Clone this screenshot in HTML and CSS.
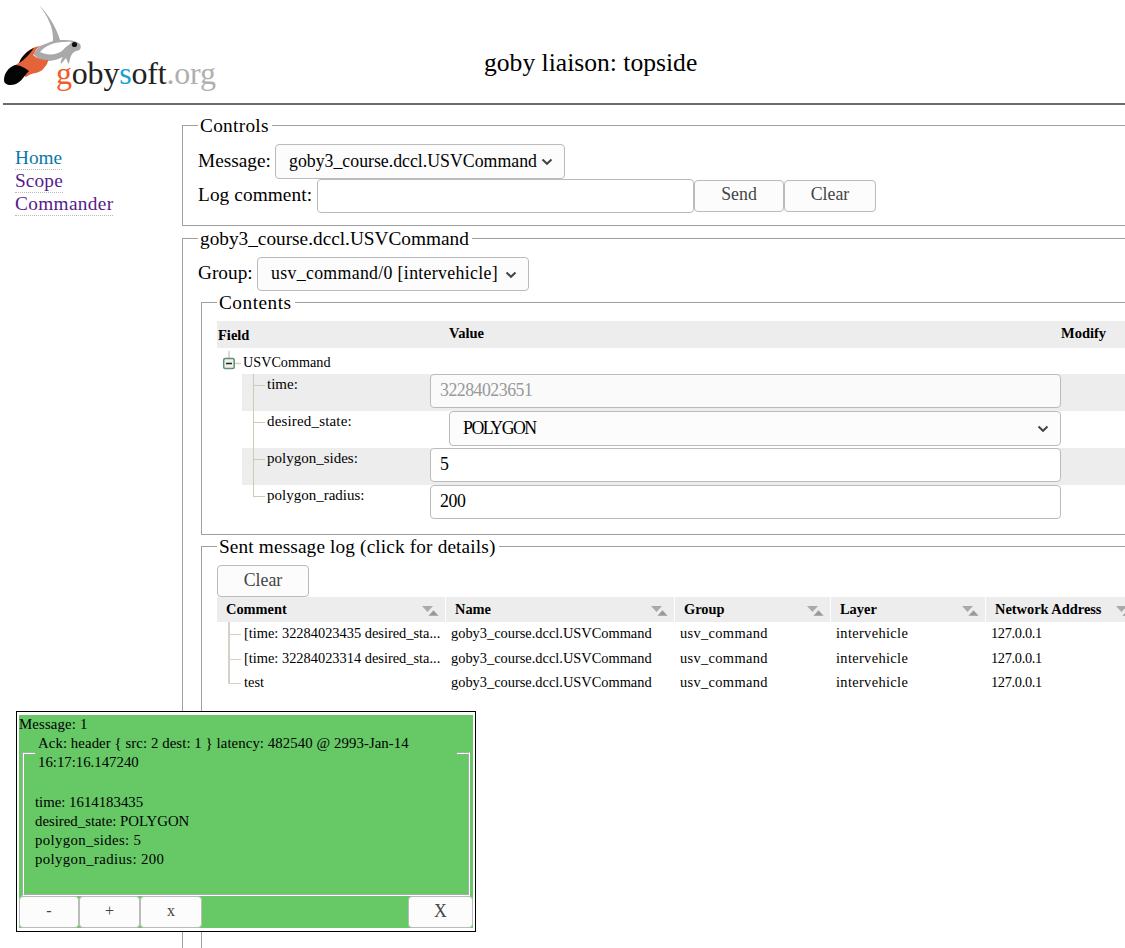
FILE: index.html
```html
<!DOCTYPE html>
<html lang="en">
<head>
<meta charset="utf-8">
<title>goby liaison: topside</title>
<link rel="stylesheet" href="styles.css">
</head>
<body>
<svg width="0" height="0" class="defs">
  <symbol id="chev" viewBox="0 0 12 8"><path d="M1.5 1.5 6 5.8 10.5 1.5" fill="none" stroke="#444" stroke-width="2"/></symbol>
  <symbol id="sort" viewBox="0 0 17 10"><path d="M0 0H11L5.5 6Z" fill="#aaa"/><path d="M6 10H17L11.500 4Z" fill="#999" stroke="#ededed" stroke-width=".5"/></symbol>
</svg>
<header class="header">
  <svg class="logo" width="222" height="100" viewBox="0 0 222 100" role="img" aria-label="gobysoft.org">
    <path d="M39 5C47 13 56 26 60 40C68 40 76 40 80 44C82 48 80 51 76 51C71 53 70 58 69 64C67 62 67 60 66 58L61 64C60 61 62 59 63 57C55 61 47 62 40 60L33 54L40 46L53 41C54 28 47 15 39 5Z" fill="#a9a9ab"/>
    <path d="M40 46C30 47 22 55 20 62L14 66L26 77C32 72 40 74 44 68C47 65 48 62 48 60C42 60 36 58 33 55C35 51 37 48 40 46Z" fill="#e4633a"/>
    <path d="M34 48C27 51 21 57 19 63C26 59 30 53 34 48Z" fill="#050505"/>
    <path d="M15 65C20 65 25 68 29 71C24 76 22 81 16 84C10 86 4 85 4 80C4 73 9 67 15 65Z" fill="#050505"/>
    <path d="M40 52C46 45 56 41 72 42C69 45 66 46 63 50C58 55 47 56 40 52Z" fill="#fff"/>
    <circle cx="74.500" cy="44.500" r="2.600" fill="#111"/>
    <text x="56" y="84" textLength="160" class="logo-text"><tspan fill="#f15a29">g</tspan><tspan fill="#222">oby</tspan><tspan fill="#1b9fd8">s</tspan><tspan fill="#222">oft</tspan><tspan fill="#b0b0b0">.org</tspan></text>
  </svg>
  <h1 class="title">goby liaison: topside</h1>
</header>
<div class="page">
  <nav class="nav">
    <a class="link home">Home</a>
    <a class="link">Scope</a>
    <a class="link commander">Commander</a>
  </nav>
  <main class="main">
    <fieldset class="box controls">
      <legend>Controls</legend>
      <div class="line"><label class="w-message">Message:</label><div class="combo message"><span>goby3_course.dccl.USVCommand</span><svg class="chev"><use href="#chev"/></svg></div></div>
      <div class="line log-line"><label class="w-log">Log comment:</label><div class="input comment"></div><button class="btn send">Send</button><button class="btn clear">Clear</button></div>
    </fieldset>
    <fieldset class="box outer">
      <legend>goby3_course.dccl.USVCommand</legend>
      <div class="line group-line"><label class="w-group">Group:</label><div class="combo group"><span>usv_command/0 [intervehicle]</span><svg class="chev"><use href="#chev"/></svg></div></div>
      <fieldset class="box contents">
        <legend class="w-contents">Contents</legend>
        <div class="tree-head"><b class="h-field">Field</b><b class="h-value">Value</b><b>Modify</b></div>
        <div class="root"><svg width="26" height="26" viewBox="0 0 26 26"><path d="M12 3V10M18 15.500H24" stroke="#d4d0c4" stroke-width="1.500" fill="none"/><rect x="6.700" y="10.500" width="10.500" height="10" rx="1.500" fill="#eef0ea" stroke="#5f8f78" stroke-width="1.500"/><path d="M9 15.500H15" stroke="#222" stroke-width="1.500"/></svg><span>USVCommand</span></div>
        <div class="row shade"><span class="field">time:</span><div class="input value disabled">32284023651</div></div>
        <div class="row"><span class="field state-name">desired_state:</span><div class="combo value state"><span>POLYGON</span><svg class="chev"><use href="#chev"/></svg></div></div>
        <div class="row shade"><span class="field">polygon_sides:</span><div class="input value number">5</div></div>
        <div class="row last"><span class="field">polygon_radius:</span><div class="input value number">200</div></div>
      </fieldset>
      <fieldset class="box log">
        <legend class="w-sent">Sent message log (click for details)</legend>
        <button class="btn clear">Clear</button>
        <div class="grid head">
          <b>Comment<svg><use href="#sort"/></svg></b><b>Name<svg><use href="#sort"/></svg></b><b>Group<svg><use href="#sort"/></svg></b><b>Layer<svg><use href="#sort"/></svg></b><b>Network Address<svg><use href="#sort"/></svg></b>
        </div>
        <div class="grid item"><span class="c1">[time: 32284023435 desired_sta...</span><span>goby3_course.dccl.USVCommand</span><span class="wide">usv_command</span><span class="wide">intervehicle</span><span class="ip">127.0.0.1</span></div>
        <div class="grid item"><span class="c1">[time: 32284023314 desired_sta...</span><span>goby3_course.dccl.USVCommand</span><span class="wide">usv_command</span><span class="wide">intervehicle</span><span class="ip">127.0.0.1</span></div>
        <div class="grid item end"><span class="c1">test</span><span>goby3_course.dccl.USVCommand</span><span class="wide">usv_command</span><span class="wide">intervehicle</span><span class="ip">127.0.0.1</span></div>
      </fieldset>
    </fieldset>
  </main>
</div>
<aside class="popup">
  <div class="popup-in">
    <div class="msg">Message: 1</div>
    <fieldset class="ack">
      <legend><span class="w-ack">Ack: header { src: 2 dest: 1 } latency: 482540 @ 2993-Jan-14</span><br>16:17:16.147240</legend>
      <div>time: 1614183435</div><div>desired_state: POLYGON</div><div class="sides">polygon_sides: 5</div><div class="radius">polygon_radius: 200</div>
    </fieldset>
    <div class="actions"><button class="btn a1">-</button><button class="btn a2">+</button><button class="btn a3">x</button><button class="btn a4">X</button></div>
  </div>
</aside>
</body>
</html>
```
FILE: styles.css
```css
* { box-sizing: border-box; }
html { overflow: hidden; }
body {
  margin: 0;
  width: 1125px;
  height: 948px;
  overflow: hidden;
  position: relative;
  background: #fff;
  color: #000;
  font-family: "Liberation Serif", serif;
  font-size: 19.3px;
}
.defs { position: absolute; width: 0; height: 0; }
.header {
  display: flex;
  height: 105px;
  margin-left: 3px;
  border-bottom: 2px solid #6b6b6b;
}
.logo { flex: none; margin-left: -3px; }
.logo-text { font-size: 32px; }
.title {
  margin: 0 0 0 262px;
  padding-top: 48px;
  font-size: 25.6px;
  line-height: 30px;
  font-weight: 400;
  white-space: nowrap;
}
.page { display: flex; height: 843px; }
.nav {
  flex: none;
  width: 182px;
  padding: 42px 0 0 15px;
  display: flex;
  flex-direction: column;
  align-items: flex-start;
}
.link {
  height: 23px;
  line-height: 21px;
  color: #551a8b;
  border-bottom: 1px dotted #bbb;
  letter-spacing: .15px;
}
.home { color: #0a78a8; letter-spacing: 0; }
.commander { letter-spacing: .35px; }
.main { flex: none; width: 943px; padding-top: 9px; overflow: hidden; }
.box {
  margin: 0;
  border: 1px solid #a0a0a0;
  border-right: 0;
  padding: 7px 0 12px 15px;
  min-width: 0;
}
.box > legend { height: 23px; line-height: 23px; padding: 0 3px 0 2px; white-space: nowrap; }
.controls > legend { letter-spacing: .3px; }
.outer { margin-top: 1px; height: 721px; border-bottom: 0; padding-bottom: 0; }
.line { display: flex; align-items: center; height: 35px; white-space: nowrap; }
.log-line { height: 34px; }
.log-line .btn { margin-bottom: 1px; }
.group-line { height: 34px; }
.line label { flex: none; line-height: 32px; padding-bottom: 2px; }
.w-message { width: 77px; }
.w-log { width: 119px; letter-spacing: .1px; }
.w-group { width: 59px; }
.combo, .input, .btn {
  border: 1px solid #bbb;
  border-radius: 4px;
  background: #fcfcfc;
  font-size: 17.8px;
}
.combo { display: flex; align-items: center; justify-content: space-between; padding: 0 11px 1px 13px; }
.message { width: 290px; height: 35px; }
.group { width: 272px; height: 34px; letter-spacing: .33px; }
.chev { width: 12px; height: 8px; margin-top: 2px; flex: none; }
.input { background: #fff; height: 34px; line-height: 31px; padding-left: 9px; }
.comment { width: 377px; }
.btn {
  height: 32px;
  padding: 0 0 2px;
  color: #444;
  font-family: inherit;
  display: block;
}
.send { width: 90px; }
.clear { width: 92px; }
.contents, .log { margin-left: 3px; }
.w-contents { letter-spacing: .5px; }
.w-sent { letter-spacing: .14px; }
.tree-head {
  display: flex;
  height: 27px;
  line-height: 25px;
  background: #ededed;
  font-size: 14.5px;
}
.h-field { width: 232px; padding: 2px 0 0 1px; }
.h-value { width: 612px; }
.root { display: flex; height: 26px; font-size: 14.2px; line-height: 28px; }
.row {
  position: relative;
  display: flex;
  height: 37px;
  margin-left: 25px;
  font-size: 15px;
}
.shade { background: #ededed; }
.row::before {
  content: "";
  position: absolute;
  left: 11px;
  top: 0;
  width: 1px;
  height: 37px;
  background: #cfcab8;
}
.row::after {
  content: "";
  position: absolute;
  left: 11px;
  top: 11px;
  width: 12px;
  height: 1px;
  background: #cfcab8;
}
.last::before { height: 12px; }
.field { width: 188px; padding-left: 25px; line-height: 20px; }
.state-name { letter-spacing: .17px; }
.value { width: 631px; }
.number { letter-spacing: -.4px; }
.disabled { background: #fafafa; color: #999; letter-spacing: -.5px; }
.state { width: 612px; height: 35px; margin-left: 19px; }
.state span { letter-spacing: -1.5px; }
.log { height: 413px; border-bottom: 0; padding-bottom: 0; }
.grid { display: grid; grid-template-columns: 229px 229px 156px 155px 139px; }
.head { height: 25px; font-size: 14.4px; line-height: 23px; }
.head b {
  display: flex;
  justify-content: space-between;
  align-items: center;
  padding: 0 6px 0 9px;
  background: #ededed;
  border-right: 1px solid #fff;
  white-space: nowrap;
}
.head b:last-child { border-right: 0; padding-right: 0; justify-content: flex-start; gap: 15px; overflow: hidden; }
.head svg { width: 17px; height: 10px; margin-top: 3px; flex: none; }
.item { position: relative; height: 24.5px; line-height: 23px; font-size: 14.4px; white-space: nowrap; }
.item span { padding-left: 5px; }
.item .c1 { padding-left: 27px; }
.item .wide { letter-spacing: .35px; }
.item .ip { letter-spacing: -.35px; }
.item::before {
  content: "";
  position: absolute;
  left: 11px;
  top: 0;
  width: 2px;
  height: 25px;
  background: #d5d1c5;
}
.item::after {
  content: "";
  position: absolute;
  left: 11px;
  top: 12px;
  width: 13px;
  height: 1px;
  background: #d5d1c5;
}
.end::before { height: 13px; }
.popup {
  position: absolute;
  left: 16px;
  top: 711px;
  width: 460px;
  height: 221px;
  padding: 3px 2px 3px;
  background: #fff;
  border: 1px solid #000;
}
.popup-in {
  height: 213px;
  background: #66c966;
  font-size: 14.8px;
  line-height: 19px;
  white-space: nowrap;
}
.msg { height: 19px; letter-spacing: .15px; }
.w-ack { letter-spacing: .08px; }
.ack {
  margin: 0 3px;
  height: 162px;
  padding: 21px 11px 0;
  border: 2px groove #fff;
}
.ack legend { width: 422px; height: 38px; padding-left: 3px; }
.sides { letter-spacing: .35px; }
.radius { letter-spacing: .38px; }
.actions { display: flex; height: 32px; }
.a1 { width: 60px; }
.a2 { width: 61px; }
.a3 { width: 62px; }
.a4 { width: 65px; margin-left: auto; }
.a1, .a2, .a3 { font-size: 16px; }
```
